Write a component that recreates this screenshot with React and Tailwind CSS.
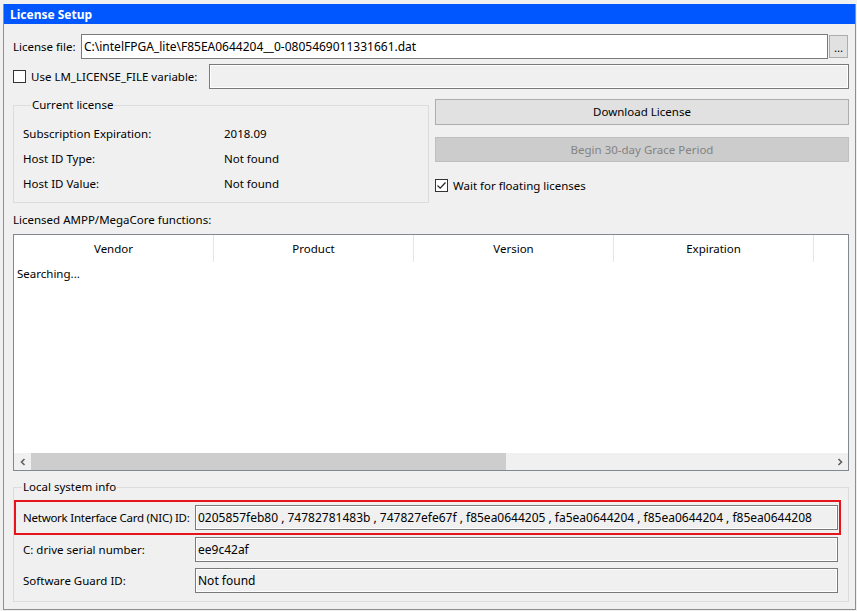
import React from 'react';

const NIC_IDS =
  '0205857feb80 , 74782781483b , 747827efe67f , f85ea0644205 , fa5ea0644204 , f85ea0644204 , f85ea0644208';

const COLUMNS = ['Vendor', 'Product', 'Version', 'Expiration'];

const CURRENT = [
  { label: 'Subscription Expiration:', value: '2018.09' },
  { label: 'Host ID Type:', value: 'Not found' },
  { label: 'Host ID Value:', value: 'Not found' }
];

const Checkbox = ({ checked }) => (
  <span className="flex h-[13px] w-[13px] shrink-0 items-center justify-center border border-[#333333] bg-white">
    {checked ? (
      <svg width="11" height="11" viewBox="0 0 11 11">
        <path d="M1.5 5.5 L4.2 8.2 L9.5 2.5" fill="none" stroke="#222" strokeWidth="1.2" />
      </svg>
    ) : null}
  </span>
);

const Field = ({ children, className = '' }) => (
  <div
    className={`flex h-[25px] items-center border border-[#7a7a7a] bg-[#f0f0f0] px-[2px] text-[12px] shadow-[inset_0_0_0_1px_#ffffff] ${className}`}
  >
    {children}
  </div>
);

const GroupBox = ({ title, className = '', children }) => (
  <fieldset className={`border border-[#dcdcdc] ${className}`}>
    <legend className="ml-[8px] px-[1px] leading-[16px]">{title}</legend>
    {children}
  </fieldset>
);

export default function App() {
  return (
    <div className="h-[611px] w-[857px] overflow-hidden bg-[#f0f0f0] pt-[4px] font-['Noto_Sans',sans-serif] text-[11.5px] text-black">
      <div className="ml-[3px] flex h-[606px] w-[853px] flex-col border-x border-b border-[#8f8f8f]">
        <div className="flex h-[20px] shrink-0 items-center bg-[#0057ff] pl-[6px] pt-[2px] text-[12px] font-bold text-white">
          License Setup
        </div>

        <div className="flex flex-col pl-[9px] pr-[6px]">
          <div className="mt-[10px] flex items-center">
            <span className="w-[68px] shrink-0">License file:</span>
            <div className="flex h-[25px] flex-1 items-center border border-[#7a7a7a] bg-white px-[2px] text-[12px]">
              C:\intelFPGA_lite\F85EA0644204__0-0805469011331661.dat
            </div>
            <button
              type="button"
              className="ml-[1px] mr-[1px] flex h-[23px] w-[19px] items-end justify-center border border-[#adadad] bg-[#e1e1e1] pb-[4px] leading-none"
            >
              ...
            </button>
          </div>

          <div className="mt-[5px] flex items-center">
            <div className="flex w-[196px] shrink-0 items-center gap-[5px]">
              <Checkbox />
              <span>Use LM_LICENSE_FILE variable:</span>
            </div>
            <Field className="flex-1" />
          </div>

          <div className="mt-[8px] flex items-start gap-[6px]">
            <GroupBox title="Current license" className="w-[416px] pb-[6px] pl-[9px] pt-[8px]">
              {CURRENT.map((r) => (
                <div key={r.label} className="flex h-[25px] items-center">
                  <span className="w-[201px]">{r.label}</span>
                  <span>{r.value}</span>
                </div>
              ))}
            </GroupBox>

            <div className="mt-[2px] flex flex-1 flex-col">
              <button type="button" className="h-[26px] border border-[#adadad] bg-[#e1e1e1]">
                Download License
              </button>
              <button
                type="button"
                className="mt-[12px] h-[25px] border border-[#bfbfbf] bg-[#cccccc] text-[#838383]"
              >
                Begin 30-day Grace Period
              </button>
              <div className="mt-[15px] flex items-center gap-[5px]">
                <Checkbox checked />
                <span>Wait for floating licenses</span>
              </div>
            </div>
          </div>

          <div className="mt-[9px] leading-[16px]">Licensed AMPP/MegaCore functions:</div>

          <div className="mt-[6px] flex h-[237px] flex-col border border-[#828790] bg-white">
            <div className="flex h-[27px] shrink-0">
              {COLUMNS.map((c) => (
                <div key={c} className="flex w-[200px] items-center justify-center border-r border-[#e5e5e5]">
                  {c}
                </div>
              ))}
            </div>
            <div className="flex-1 pl-[3px] pt-[4px] leading-[16px]">Searching...</div>
            <div className="flex h-[17px] shrink-0 items-stretch bg-[#f0f0f0]">
              <div className="flex w-[17px] items-center justify-center">
                <svg width="8" height="8" viewBox="0 0 8 8">
                  <path d="M5.5 1 L2.5 4 L5.5 7" fill="none" stroke="#606060" strokeWidth="1.6" />
                </svg>
              </div>
              <div className="w-[475px] bg-[#cdcdcd]" />
              <div className="flex-1" />
              <div className="flex w-[17px] items-center justify-center">
                <svg width="8" height="8" viewBox="0 0 8 8">
                  <path d="M2.5 1 L5.5 4 L2.5 7" fill="none" stroke="#606060" strokeWidth="1.6" />
                </svg>
              </div>
            </div>
          </div>

          <GroupBox title="Local system info" className="mt-[8px] pb-[8px] pt-[5px]">
            <div className="flex w-[827px] items-center border-2 border-[#e8141c] py-[3px] pl-[7px] pr-[1px]">
              <span className="w-[172px] shrink-0 whitespace-nowrap tracking-[-0.25px]">
                Network Interface Card (NIC) ID:
              </span>
              <Field className="flex-1 whitespace-nowrap">{NIC_IDS}</Field>
            </div>
            <div className="mt-[2px] flex items-center pl-[9px]">
              <span className="w-[172px] shrink-0">C: drive serial number:</span>
              <Field className="w-[643px]">ee9c42af</Field>
            </div>
            <div className="mt-[6px] flex items-center pl-[9px]">
              <span className="w-[172px] shrink-0">Software Guard ID:</span>
              <Field className="w-[643px]">Not found</Field>
            </div>
          </GroupBox>
        </div>
      </div>
    </div>
  );
}
